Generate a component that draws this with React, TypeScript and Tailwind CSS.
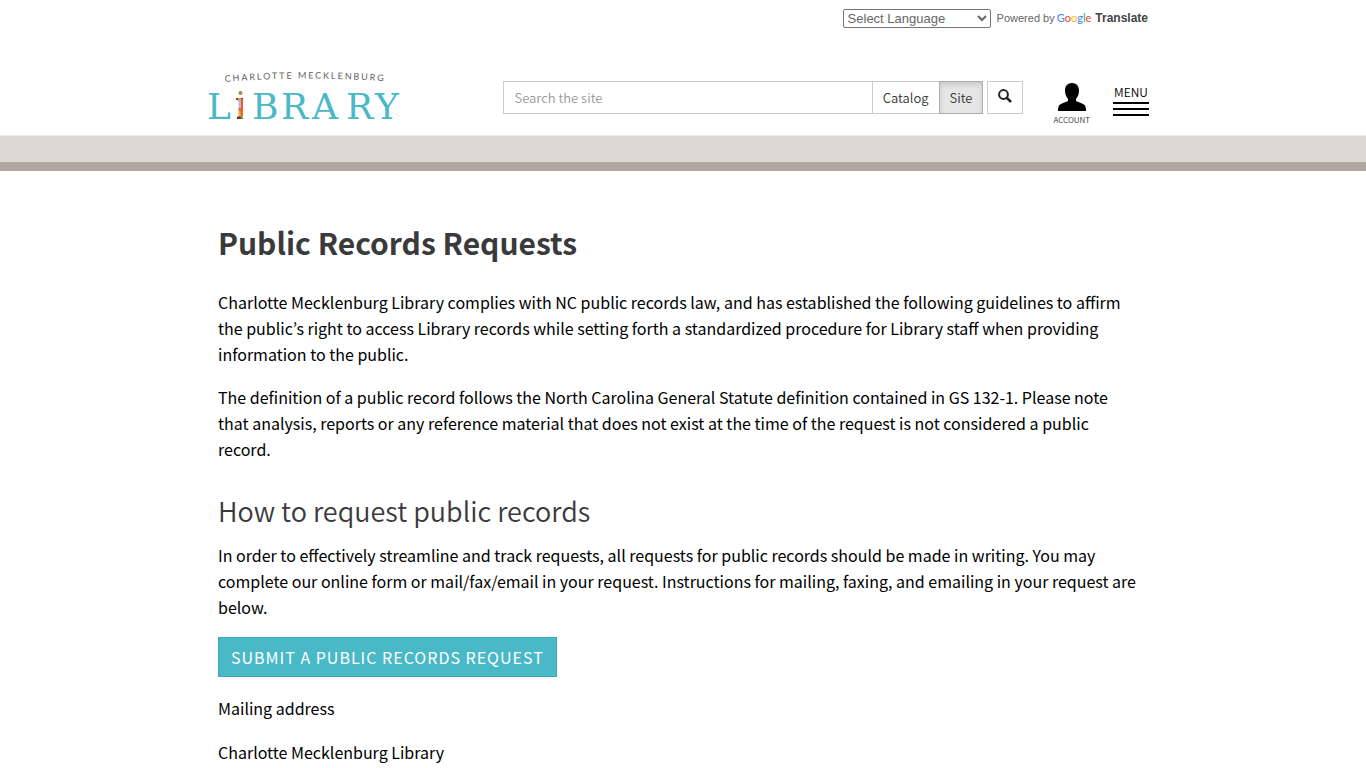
import { FormEvent } from "react";

const sourceSans = "font-['Noto_Sans_CJK_KR',sans-serif]";

function LibraryLogo() {
  return (
    <svg viewBox="0 0 194 54" className="h-[54px] w-[194px] overflow-visible" role="img" aria-label="Charlotte Mecklenburg Library">
      <path id="arc" d="M18 12 Q97 5 188 12" fill="none" />
      <text fontSize="9" letterSpacing="1.900" fontWeight="400" fill="#5f6063" fontFamily="Lato, sans-serif">
        <textPath href="#arc">CHARLOTTE MECKLENBURG</textPath>
      </text>
      <text y="49" x="0 45 74 105 139 168" fontSize="36" fontWeight="400" fill="#49b8c7" fontFamily="DejaVu Serif, serif">
        LBRARY
      </text>
      {/* the figure that stands in for the i */}
      <circle cx="33.500" cy="23" r="2" fill="#9a8a4a" />
      <path d="M29 28h7v3h-4l-3-1.500z" fill="#8a2f2c" />
      <path d="M31 28h3v2h-3z" fill="#e8a23a" />
      <path d="M31.500 30h3v8h-3z" fill="#b9b4dc" />
      <path d="M34 29h2v9h-2z" fill="#ee5a34" />
      <path d="M31.500 38h4.500v8h-4z" fill="#e2642f" />
      <path d="M31.500 41h2v6h-2z" fill="#f2b233" />
      <path d="M30 46.500h4V49h-4z" fill="#7b2345" />
      <path d="M34 45h2v3.500h1v.5h-3z" fill="#86a83c" />
    </svg>
  );
}

function SearchForm() {
  const handleSubmit = (e: FormEvent) => e.preventDefault();

  return (
    <form onSubmit={handleSubmit} className="flex h-[33px] w-[520px] text-[13px] text-[#333]">
      <input
        type="text"
        aria-label="Search the site"
        placeholder="Search the site"
        className="min-w-0 flex-1 border border-[#ccc] px-2.5 placeholder:text-[#999]"
      />
      <button type="button" className="-ml-px border border-[#ccc] px-2.5">
        Catalog
      </button>
      <button
        type="button"
        aria-pressed="true"
        className="-ml-px border border-[#adadad] bg-[#e6e6e6] px-2.5 shadow-[inset_0_3px_5px_rgba(0,0,0,0.125)]"
      >
        Site
      </button>
      <button type="submit" aria-label="Search" className="ml-1 flex w-9 items-center justify-center border border-[#ccc]">
        <svg viewBox="0 0 14 14" className="mb-1 size-3.5" fill="none" stroke="#222">
          <circle cx="5.500" cy="5.500" r="4.400" strokeWidth="2" />
          <path d="M8.800 8.800L13 13" strokeWidth="2.600" />
        </svg>
      </button>
    </form>
  );
}

function Header() {
  return (
    <header className="font-[350]">
      <div className="border-b border-[#eee]">
        <div className="mx-auto max-w-[932px]">
          <div className="flex h-9 items-center justify-end pr-px font-['Liberation_Sans',Arial,sans-serif] text-[11px] font-normal text-[#666]">
            <select aria-label="Select Language" className="mr-1.5 h-[19px] w-[148px] rounded-[2px] border border-[#767676] bg-white text-[13px]">
              <option>Select Language</option>
            </select>
            <span className="mr-0.5">Powered by</span>
            <a href="#translate" className="flex items-center gap-1 text-xs font-bold text-[#444]">
              <span className="font-['Lato',sans-serif] text-[11px] font-normal">
                <span className="text-[#4285f4]">G</span>
                <span className="text-[#ea4335]">o</span>
                <span className="text-[#fbbc05]">o</span>
                <span className="text-[#4285f4]">g</span>
                <span className="text-[#34a853]">l</span>
                <span className="text-[#ea4335]">e</span>
              </span>
              Translate
            </a>
          </div>
          <div className="flex h-[99px] items-start pt-[34px]">
            <a href="#home" className="-ml-2.5">
              <LibraryLogo />
            </a>
            <div className="ml-auto flex items-start pt-[11px]">
              <SearchForm />
              <a href="#account" className="ml-[30px] flex flex-col items-center gap-[3px] text-[8px] leading-3 text-[#333]">
                <svg viewBox="0 0 28 28" className="mt-0.5 size-7">
                  <path
                    d="M14 0c4.500 0 7 3 7 7.500 0 3.500-1 6-3 8.500v2c4 2 8.500 2.500 9.500 5.500.5 1.500.5 3 .5 4.500H0c0-1.500 0-3 .5-4.500 1-3 5.500-3.500 9.500-5.500v-2c-2-2.500-3-5-3-8.500C7 3 9.500 0 14 0z"
                    fill="#000"
                  />
                </svg>
                ACCOUNT
              </a>
              <button type="button" className="ml-[23px] text-[12px] leading-[21px] text-black">
                MENU
                <span className="flex flex-col gap-1">
                  <span className="h-0.5 w-9 bg-black" />
                  <span className="h-0.5 w-9 bg-black" />
                  <span className="h-0.5 w-9 bg-black" />
                </span>
              </button>
            </div>
          </div>
        </div>
      </div>
      <div className="h-[35px] border-b-[9px] border-[#b0a89f] bg-[#dcd9d3]" />
    </header>
  );
}

export default function App() {
  return (
    <div className={`h-screen overflow-hidden bg-white text-black ${sourceSans}`}>
      <Header />
      <main className="mx-auto max-w-[930px] pt-12 pr-2 text-[16px] leading-[26px]">
        <h1 className="mb-6 text-[30px] leading-[46px] font-bold text-[#3a3a3c]">Public Records Requests</h1>
        <p className="mb-[17px]">
          Charlotte Mecklenburg Library complies with NC public records law, and has established the following
          guidelines to affirm the public’s right to access Library records while setting forth a standardized
          procedure for Library staff when providing information to the public.
        </p>
        <p className="mb-[17px]">
          The definition of a public record follows the North Carolina General Statute definition contained in GS
          132-1. Please note that analysis, reports or any reference material that does not exist at the time of the
          request is not considered a public record.
        </p>
        <h2 className="mt-[30px] mb-3 text-[27px] leading-[38px] font-[350] text-[#3a3a3c]">How to request public records</h2>
        <p className="mb-[17px]">
          In order to effectively streamline and track requests, all requests for public records should be made in
          writing. You may complete our online form or mail/fax/email in your request. Instructions for mailing,
          faxing, and emailing in your request are below.
        </p>
        <a
          href="#submit"
          className="mb-[18px] inline-block border border-[#3ba9b8] bg-[#49b8c7] px-3 py-1.5 tracking-[1px] text-white uppercase"
        >
          Submit a Public Records Request
        </a>
        <p className="mb-[18px]">Mailing address</p>
        <p>Charlotte Mecklenburg Library</p>
      </main>
    </div>
  );
}
